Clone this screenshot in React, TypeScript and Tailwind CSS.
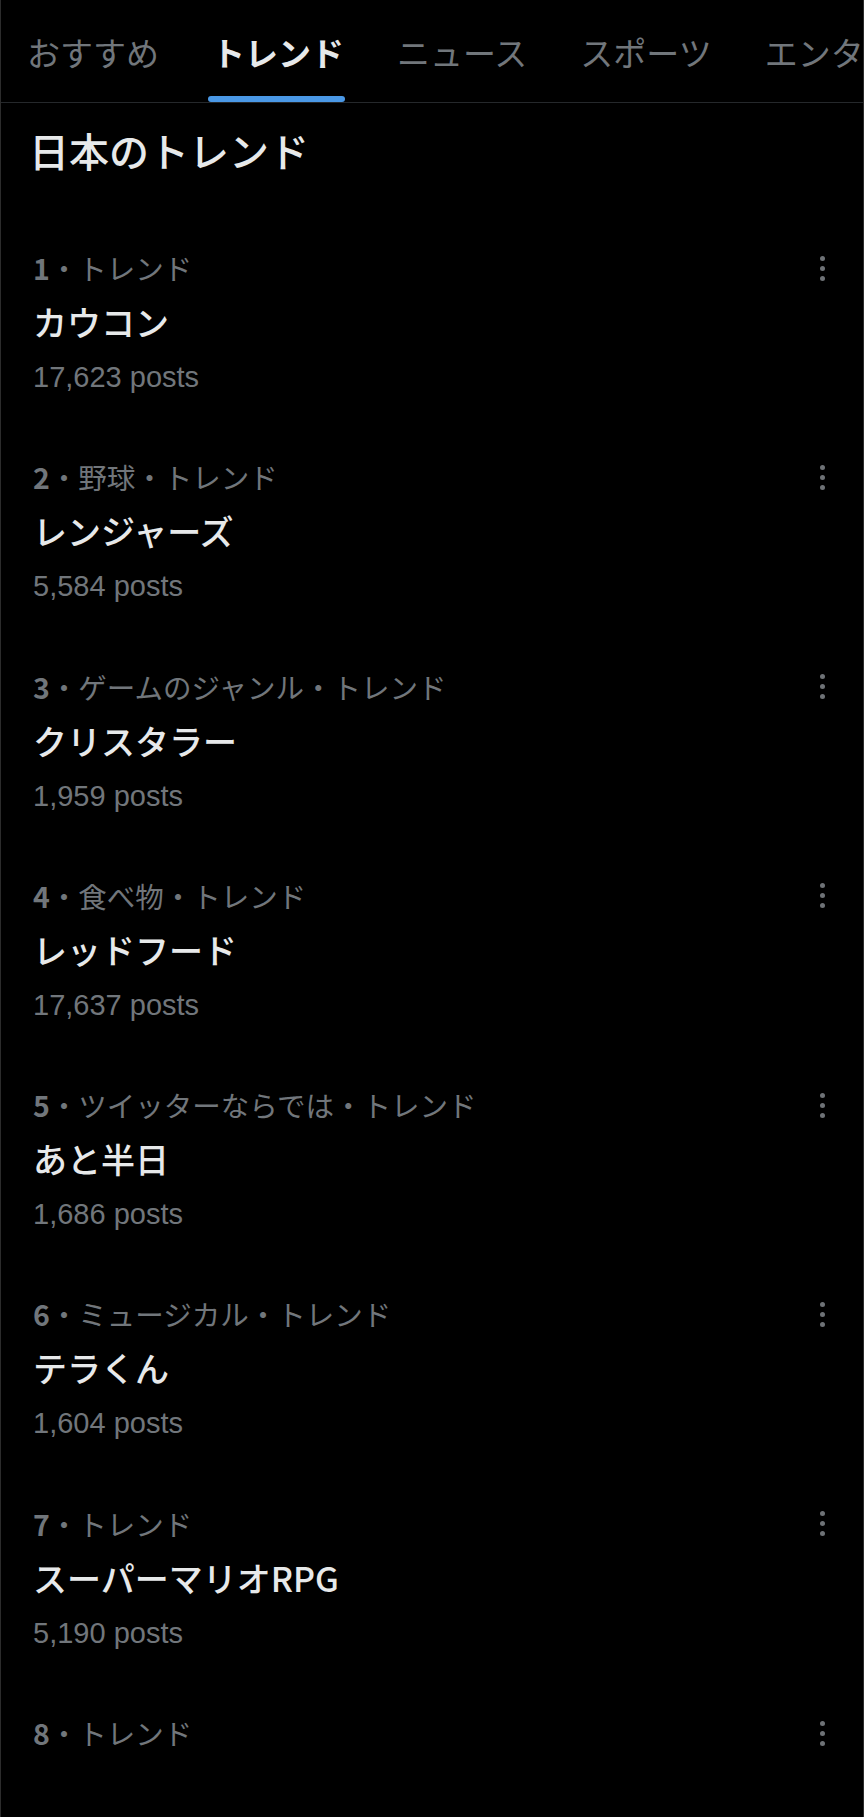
const jp = "font-['Noto_Sans_CJK_JP','Noto_Sans',sans-serif]";

const tabs = ["おすすめ", "トレンド", "ニュース", "スポーツ", "エンタ"];

const trends = [
	{ rank: 1, category: "トレンド", name: "カウコン", posts: "17,623" },
	{ rank: 2, category: "野球・トレンド", name: "レンジャーズ", posts: "5,584" },
	{ rank: 3, category: "ゲームのジャンル・トレンド", name: "クリスタラー", posts: "1,959" },
	{ rank: 4, category: "食べ物・トレンド", name: "レッドフード", posts: "17,637" },
	{ rank: 5, category: "ツイッターならでは・トレンド", name: "あと半日", posts: "1,686" },
	{ rank: 6, category: "ミュージカル・トレンド", name: "テラくん", posts: "1,604" },
	{ rank: 7, category: "トレンド", name: "スーパーマリオRPG", posts: "5,190" },
	{ rank: 8, category: "トレンド" },
];

type Trend = { rank: number; category: string; name?: string; posts?: string };

const MoreDots = () => (
	<div className="flex flex-col gap-[5px]">
		<span className="h-[5px] w-[5px] rounded-full bg-[#6e7276]" />
		<span className="h-[5px] w-[5px] rounded-full bg-[#6e7276]" />
		<span className="h-[5px] w-[5px] rounded-full bg-[#6e7276]" />
	</div>
);

const TrendItem = ({ item }: { item: Trend }) => {
	return (
		<li className="h-[209.3px] pt-[30px] pl-[32px] pr-[38px]">
			<div className="flex items-center justify-between">
				<p className={`${jp} text-[28.5px] leading-[40px] text-[#71767b]`}>
					<span className="font-bold">{item.rank}</span>・{item.category}
				</p>
				<MoreDots />
			</div>
			{item.name && (
				<p className={`${jp} mt-[6px] text-[34px] font-medium leading-[56px] text-[#e7e9ea]`}>
					{item.name}
				</p>
			)}
			{item.posts && (
				<p className="mt-[7px] font-['Liberation_Sans',sans-serif] text-[29px] leading-[40px] text-[#71767b]">
					{item.posts} posts
				</p>
			)}
		</li>
	);
};

export default function App() {
	return (
		<div className="h-[1817px] w-[864px] overflow-hidden border-x border-[#2c2c2c] bg-black">
			<nav className="flex gap-[53px] overflow-hidden whitespace-nowrap border-b border-[#25282b] pl-[26px]">
				{tabs.map((tab, idx) => (
					<div key={tab} className="flex shrink-0 flex-col pt-[30px]">
						<span
							className={`${jp} text-[33px] leading-[44px] ${
								idx === 1 ? "font-bold text-[#e7e9ea]" : "text-[#71767b]"
							}`}
						>
							{tab}
						</span>
						<span
							className={`-ml-[4px] -mr-px mt-[22px] h-[6px] rounded-full ${
								idx === 1 ? "bg-[#4a98e6]" : "bg-transparent"
							}`}
						/>
					</div>
				))}
			</nav>
			<h2 className={`${jp} pt-[21px] pl-[28px] text-[40px] font-medium leading-[52px] text-[#e7e9ea]`}>
				日本のトレンド
			</h2>
			<ul className="pt-[42px]">
				{trends.map((item) => (
					<TrendItem key={item.rank} item={item} />
				))}
			</ul>
		</div>
	);
}
